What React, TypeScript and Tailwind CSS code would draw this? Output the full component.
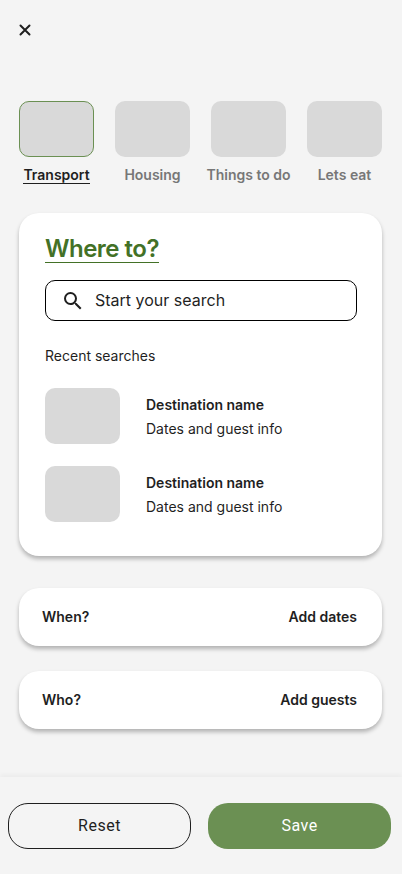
import React from "react";

const categories = ["Transport", "Housing", "Things to do", "Lets eat"];
const recents = [0, 1];
const cardShadow = "shadow-[0_3px_4px_rgba(0,0,0,0.27)]";

function SearchIcon() {
  return (
    <svg width="24" height="24" viewBox="0 0 24 24" fill="#1f1f1f" aria-hidden="true">
      <path d="M15.5 14h-.79l-.28-.27A6.471 6.471 0 0 0 16 9.5 6.5 6.5 0 1 0 9.5 16c1.61 0 3.09-.59 4.23-1.57l.27.28v.79l5 4.99L20.49 19l-4.99-5zm-6 0C7.01 14 5 11.99 5 9.5S7.01 5 9.5 5 14 7.01 14 9.5 11.99 14 9.5 14z" />
    </svg>
  );
}

function OptionRow({ label, action }: { label: string; action: string }) {
  return (
    <button
      className={`flex h-[58px] w-full items-center justify-between rounded-[20px] bg-white pr-[25px] pl-[23px] text-sm font-semibold ${cardShadow}`}
    >
      <span>{label}</span>
      <span>{action}</span>
    </button>
  );
}

export default function App() {
  return (
    <div className="flex h-[874px] w-full flex-col overflow-hidden bg-[#f4f4f4] font-['Inter',sans-serif] text-[#1f1f1f]">
      <header className="h-[101px] shrink-0 pt-[24px] pl-[19px]">
        <button aria-label="Close" className="block">
          <svg width="12" height="12" viewBox="0 0 12 12" fill="none" stroke="#1f1f1f" strokeWidth="2" strokeLinecap="round">
            <path d="M1.500 1.500l9 9M10.500 1.500l-9 9" />
          </svg>
        </button>
      </header>

      <nav className="flex h-[112px] shrink-0 justify-between pr-[20px] pl-[19px]">
        {categories.map((name, i) => (
          <button key={name} className="flex w-[75px] flex-col items-center">
            <span
              className={`h-14 w-[75px] shrink-0 rounded-[10px] bg-[#d9d9d9] ${i === 0 ? "border border-[#6b9053]" : ""}`}
            />
            <span
              className={`mt-2 h-[19px] border-b text-sm font-semibold whitespace-nowrap ${
                i === 0 ? "border-[#1f1f1f] text-[#1f1f1f]" : "border-transparent text-[#777777]"
              }`}
            >
              {name}
            </span>
          </button>
        ))}
      </nav>

      <main className="flex flex-1 flex-col pr-[20px] pl-[19px]">
        <section className={`h-[343px] rounded-[20px] bg-white pt-5 pr-[25px] pl-[26px] ${cardShadow}`}>
          <h1 className="h-[30px] w-fit border-b border-[#437127] text-2xl leading-[31px] font-semibold tracking-[-0.5px] text-[#437127]">
            Where to?
          </h1>
          <div className="mt-[17px] flex h-[41px] items-center rounded-[10px] border border-black pl-[15px]">
            <SearchIcon />
            <span className="ml-[10px] pb-[2px] text-base">Start your search</span>
          </div>
          <p className="mt-[25px] text-sm leading-5">Recent searches</p>
          <div className="mt-[22px] flex flex-col gap-[22px]">
            {recents.map((id) => (
              <div key={id} className="flex h-14 items-center">
                <div className="h-14 w-[75px] rounded-[10px] bg-[#d9d9d9]" />
                <div className="ml-[26px] pt-[2px] text-sm leading-6">
                  <p className="font-semibold">Destination name</p>
                  <p>Dates and guest info</p>
                </div>
              </div>
            ))}
          </div>
        </section>
        <div className="mt-8 flex flex-col gap-[25px]">
          <OptionRow label="When?" action="Add dates" />
          <OptionRow label="Who?" action="Add guests" />
        </div>
      </main>

      <footer className="flex h-[97px] shrink-0 gap-[17px] bg-[#f4f4f4] pt-[26px] pl-2 font-['Roboto',sans-serif] text-base tracking-[0.5px] shadow-[0_-3px_4px_rgba(0,0,0,0.03)]">
        <button className="h-[46px] w-[183px] rounded-[20px] border border-[#1f1f1f]">Reset</button>
        <button className="h-[46px] w-[183px] rounded-[20px] bg-[#6b9053] text-white">Save</button>
      </footer>
    </div>
  );
}
